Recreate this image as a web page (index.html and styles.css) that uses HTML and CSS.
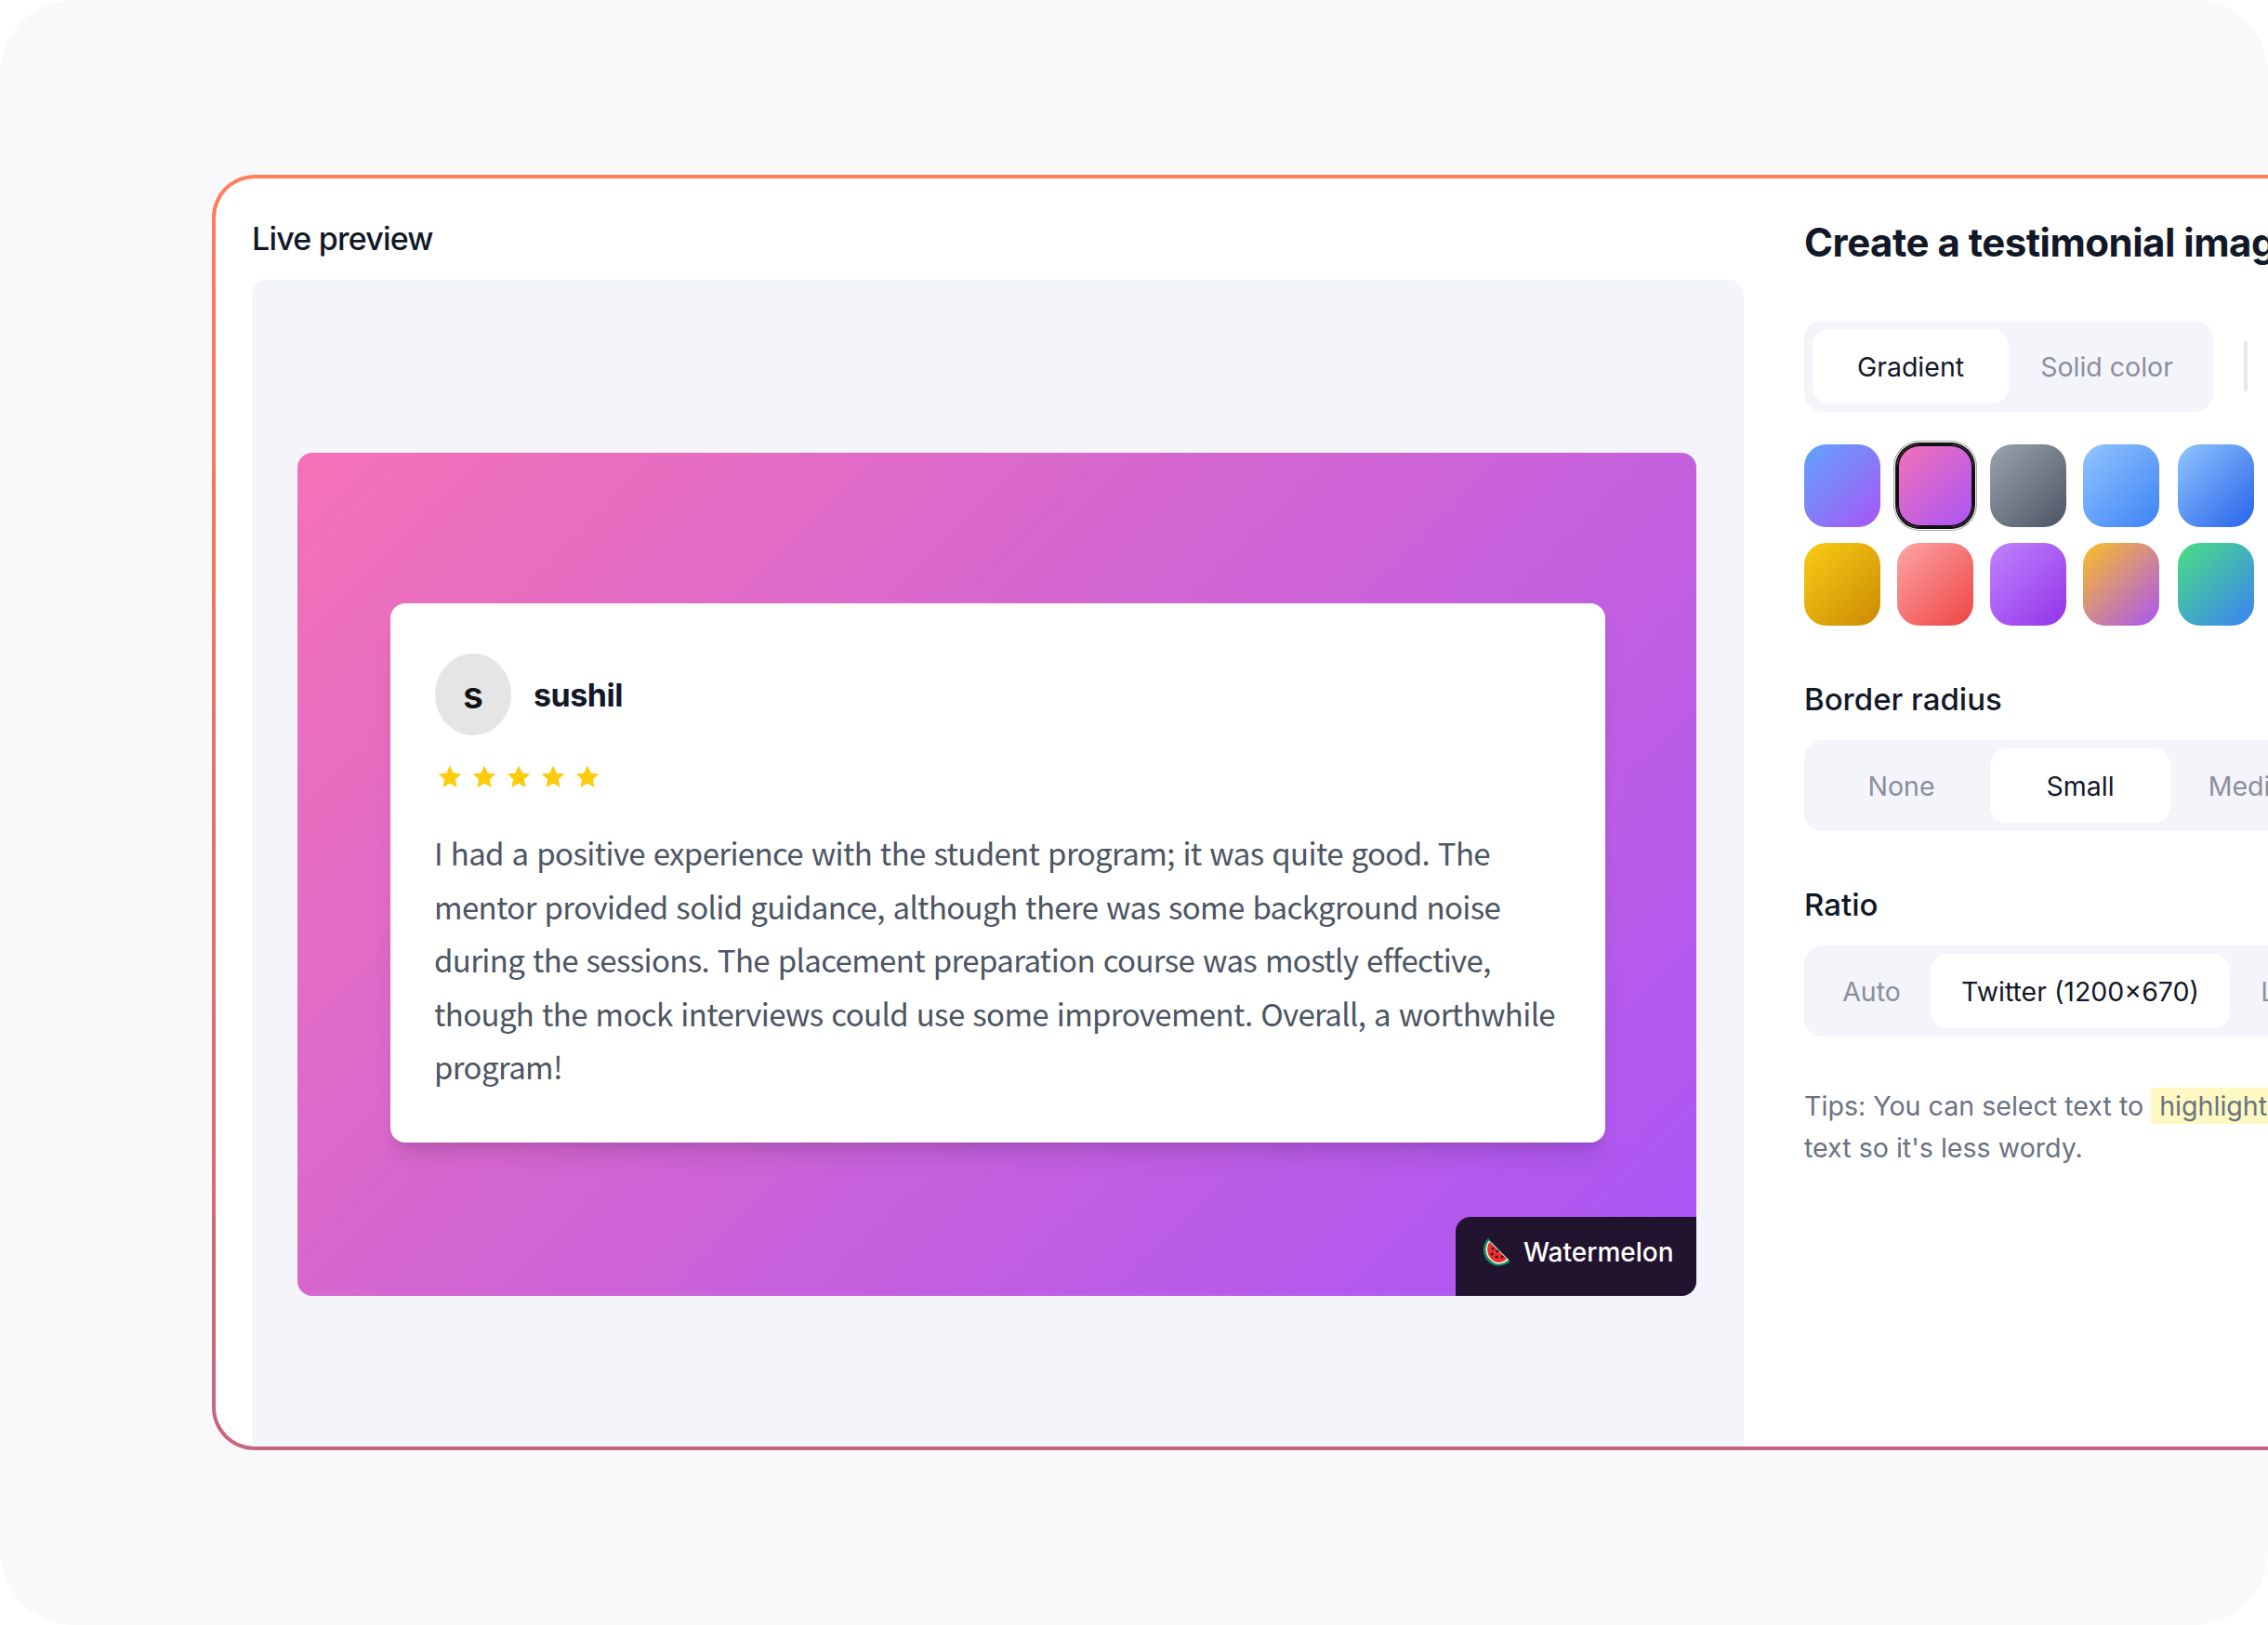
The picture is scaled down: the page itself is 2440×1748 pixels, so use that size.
FILE: index.html
```html
<!doctype html>
<html lang="en">
<head>
  <meta charset="utf-8">
  <title>Create a testimonial image</title>
  <link rel="stylesheet" href="styles.css">
</head>
<body>

  <div class="screen">
    <div class="frame">
      <div class="frame-inner">

        <section class="preview-col">
          <div class="preview-title">Live preview</div>
          <div class="preview-area">
            <div class="canvas">
              <div class="testimonial">
                <div class="author">
                  <div class="avatar">s</div>
                  <div class="author-name">sushil</div>
                </div>
                <div class="stars">
                  <svg viewBox="0 0 24 24"><path d="M12 1l3.4 7.3 7.9.9-5.9 5.4 1.6 7.9L12 18.600l-7 3.900 1.600-7.900L.7 9.200l7.900-.9z"/></svg>
                  <svg viewBox="0 0 24 24"><path d="M12 1l3.4 7.3 7.9.9-5.9 5.4 1.6 7.9L12 18.600l-7 3.900 1.600-7.900L.7 9.200l7.900-.9z"/></svg>
                  <svg viewBox="0 0 24 24"><path d="M12 1l3.4 7.3 7.9.9-5.9 5.4 1.6 7.9L12 18.600l-7 3.900 1.600-7.900L.7 9.200l7.900-.9z"/></svg>
                  <svg viewBox="0 0 24 24"><path d="M12 1l3.4 7.3 7.9.9-5.9 5.4 1.6 7.9L12 18.600l-7 3.900 1.600-7.900L.7 9.200l7.900-.9z"/></svg>
                  <svg viewBox="0 0 24 24"><path d="M12 1l3.4 7.3 7.9.9-5.9 5.4 1.6 7.9L12 18.600l-7 3.900 1.600-7.900L.7 9.200l7.900-.9z"/></svg>
                </div>
                <p class="quote">I had a positive experience with the student program; it was quite good. The<br>mentor provided solid guidance, although there was some background noise<br>during the sessions. The placement preparation course was mostly effective,<br>though the mock interviews could use some improvement. Overall, a worthwhile<br>program!</p>
              </div>
              <div class="badge">
                <svg class="melon" viewBox="0 0 30 32">
                  <path d="M6 1C-1 8-1 20 7 27c6 5 16 5 23-1z" fill="#0f8a5f"/>
                  <path d="M7 3.500C2 9 2 19 9 25c5 5 13 5 19-1z" fill="#e8f5d8"/>
                  <path d="M7.500 5C4 10 4 18 10 24c5 4 11 4 16-1z" fill="#ef2f2f"/>
                  <g fill="#3a1414">
                    <circle cx="11" cy="12" r="1.500"/><circle cx="16" cy="15" r="1.500"/>
                    <circle cx="10" cy="18" r="1.500"/><circle cx="15" cy="21" r="1.500"/>
                    <circle cx="21" cy="21" r="1.500"/>
                  </g>
                </svg>
                <span>Watermelon</span>
              </div>
            </div>
          </div>
        </section>

        <section class="settings-col">
          <h1 class="settings-title">Create a testimonial image</h1>

          <div class="bg-row">
            <div class="segment segment-bg">
              <div class="segment-item item-gradient active">Gradient</div>
              <div class="segment-item item-solid">Solid color</div>
            </div>
            <div class="divider"></div>
          </div>

          <div class="swatches">
            <div class="swatch sw-1"></div>
            <div class="swatch sw-2 selected"></div>
            <div class="swatch sw-3"></div>
            <div class="swatch sw-4"></div>
            <div class="swatch sw-5"></div>
            <div class="swatch sw-6"></div>
            <div class="swatch sw-7"></div>
            <div class="swatch sw-8"></div>
            <div class="swatch sw-9"></div>
            <div class="swatch sw-10"></div>
          </div>

          <div class="field-label label-radius">Border radius</div>
          <div class="segment segment-radius">
            <div class="segment-item item-none">None</div>
            <div class="segment-item item-small active">Small</div>
            <div class="segment-item item-medium">Medium</div>
          </div>

          <div class="field-label label-ratio">Ratio</div>
          <div class="segment segment-ratio">
            <div class="segment-item item-auto">Auto</div>
            <div class="segment-item item-twitter active">Twitter (1200×670)</div>
            <div class="segment-item item-linkedin">LinkedIn</div>
          </div>

          <p class="tips">Tips: You can select text to <mark>highlight</mark> it, or trim the<br>text so it's less wordy.</p>
        </section>

      </div>
    </div>
  </div>

</body>
</html>
```

FILE: styles.css
```css
html, body {
  margin: 0;
  padding: 0;
  background-color: #fff;
  font-family: Inter, "Noto Sans", sans-serif;
  color: #111827;
}

.screen {
  width: 2440px;
  height: 1748px;
  background-color: #f9f9fc;
  border-radius: 80px;
  overflow: hidden;
  padding: 188px 0 0 228px;
  box-sizing: border-box;
}

.frame {
  width: 2500px;
  height: 1372px;
  padding: 4px;
  box-sizing: border-box;
  border-radius: 46px;
  background: linear-gradient(to bottom, #ff7f57, #c8657c);
}

.frame-inner {
  display: flex;
  height: 100%;
  background-color: #fff;
  border-radius: 42px;
  overflow: hidden;
}

.preview-col {
  display: flex;
  flex-direction: column;
  flex: 0 0 1605px;
  margin-left: 39px;
}

.preview-title {
  height: 109px;
  box-sizing: border-box;
  padding-top: 41px;
  font-size: 34px;
  line-height: 48px;
  font-weight: 500;
  letter-spacing: -0.8px;
}

.preview-area {
  flex: 1;
  padding: 186px 51px 0 49px;
  background-color: #f4f5fb;
  border-radius: 16px 16px 0 0;
}

.canvas {
  position: relative;
  display: flex;
  align-items: flex-start;
  width: 1505px;
  height: 907px;
  box-sizing: border-box;
  padding: 162px 98px 0 100px;
  border-radius: 16px;
  background: linear-gradient(135deg, #f472b6, #a855f7);
}

.testimonial {
  width: 1307px;
  height: 580px;
  box-sizing: border-box;
  padding: 54px 48px 0;
  background-color: #fff;
  border-radius: 16px;
  box-shadow: 0 20px 25px -5px rgba(0, 0, 0, 0.1), 0 8px 10px -6px rgba(0, 0, 0, 0.1);
}

.author {
  display: flex;
  align-items: center;
  gap: 24px;
}

.avatar {
  display: flex;
  align-items: center;
  justify-content: center;
  width: 82px;
  height: 88px;
  border-radius: 50%;
  background-color: #e5e5e5;
  font-size: 40px;
  font-weight: 600;
  color: #111;
}

.author-name {
  font-size: 34px;
  font-weight: 700;
  letter-spacing: -0.5px;
}

.stars {
  display: flex;
  gap: 11px;
  margin: 31px 0 0 3px;
}

.stars svg {
  width: 26px;
  height: 27px;
  fill: #fdcc0d;
}

.quote {
  margin: 40px 0 0 -1px;
  font-family: "Noto Sans CJK KR", "Noto Sans", sans-serif;
  font-size: 33px;
  line-height: 57.5px;
  letter-spacing: -0.65px;
  word-spacing: 2px;
  color: #4b5563;
  white-space: nowrap;
}

.badge {
  position: absolute;
  right: 0;
  bottom: 0;
  display: flex;
  align-items: center;
  gap: 14px;
  width: 259px;
  height: 85px;
  box-sizing: border-box;
  padding: 0 0 10px 29px;
  background-color: #22132f;
  border-radius: 16px 0 16px 0;
  color: #fff;
  font-size: 28px;
  font-weight: 500;
}

.melon {
  width: 30px;
  height: 32px;
}

.settings-col {
  flex: 1;
  margin-left: 65px;
}

.settings-title {
  margin: 0;
  padding-top: 38px;
  font-size: 42px;
  line-height: 62px;
  font-weight: 700;
  letter-spacing: -0.5px;
  white-space: nowrap;
}

.bg-row {
  display: flex;
  align-items: center;
  gap: 33px;
  margin-top: 53px;
}

.segment {
  display: flex;
  box-sizing: border-box;
  width: 440px;
  height: 98px;
  padding: 9px;
  background-color: #f4f5fb;
  border-radius: 20px;
  white-space: nowrap;
  font-size: 28.500px;
  color: #8b8f9b;
}

.segment-item {
  display: flex;
  flex: none;
  align-items: center;
  justify-content: center;
  border-radius: 18px;
}

.segment-item.active {
  background-color: #fff;
  color: #111827;
}

.item-gradient { width: 211px; }
.item-solid { width: 211px; }

.divider {
  width: 4px;
  height: 54px;
  background-color: #e5e7eb;
}

.swatches {
  display: grid;
  grid-template-columns: repeat(5, 82px);
  grid-auto-rows: 89px;
  column-gap: 18px;
  row-gap: 17px;
  margin-top: 35px;
}

.swatch {
  width: 82px;
  border-radius: 24px;
}

.sw-5, .sw-10 { margin-left: 2px; }

.swatch.selected {
  box-shadow: inset 0 0 0 2px #111, 0 0 0 2px #111, 0 0 0 3px #fff, 0 0 0 4px #a3a3a3;
}

.sw-1 { background: linear-gradient(135deg, #60a5fa, #a855f7); }
.sw-2 { background: linear-gradient(135deg, #f472b6, #a855f7); }
.sw-3 { background: linear-gradient(135deg, #9ca3af, #4b5563); }
.sw-4 { background: linear-gradient(135deg, #93c5fd, #3b82f6); }
.sw-5 { background: linear-gradient(135deg, #93c5fd, #2563eb); }
.sw-6 { background: linear-gradient(135deg, #facc15, #ca8a04); }
.sw-7 { background: linear-gradient(135deg, #fca5a5, #ef4444); }
.sw-8 { background: linear-gradient(135deg, #c084fc, #9333ea); }
.sw-9 { background: linear-gradient(135deg, #fbbf24, #a855f7); }
.sw-10 { background: linear-gradient(135deg, #4ade80, #3b82f6); }

.field-label {
  font-size: 33px;
  line-height: 46px;
  font-weight: 500;
}

.label-radius { margin-top: 56px; }
.label-ratio { margin-top: 56px; }

.segment-radius,
.segment-ratio {
  width: 520px;
  margin-top: 21px;
}

.item-none { width: 191px; }
.item-small { width: 194px; }
.item-medium { width: 190px; }
.item-auto { width: 127px; }
.item-twitter { width: 322px; }
.item-linkedin { width: 180px; }

.tips {
  margin: 53px 0 0;
  font-size: 28.600px;
  line-height: 44.500px;
  color: #6b7280;
  white-space: nowrap;
}

.tips mark {
  padding: 2px 9px;
  background-color: #fef9c3;
  color: inherit;
}
```
